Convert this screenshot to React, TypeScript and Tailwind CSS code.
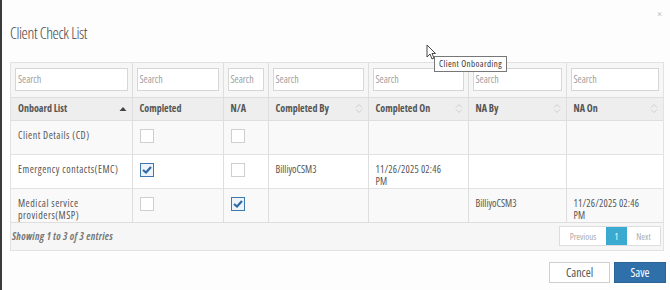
import React from "react";

const SortBoth = () => (
  <svg width="8" height="11" viewBox="0 0 8 11" className="shrink-0">
    <path d="M1 4.5 L4 1.5 L7 4.5" fill="none" stroke="#cfcfcf" strokeWidth="1" />
    <path d="M1 6.5 L4 9.5 L7 6.5" fill="none" stroke="#cfcfcf" strokeWidth="1" />
  </svg>
);

const SortUp = () => (
  <svg width="8" height="6" viewBox="0 0 8 6" className="shrink-0">
    <path d="M0.5 5 L4 1 L7.5 5 Z" fill="#444" />
  </svg>
);

const Check = ({ checked }: { checked: boolean }) =>
  checked ? (
    <div className="w-[14px] h-[14px] border border-[#3f78b0] bg-[#eef3f9] flex items-center justify-center">
      <svg width="10" height="8" viewBox="0 0 10 8">
        <path d="M1 4 L4 6.5 L9 1" fill="none" stroke="#2e6aa5" strokeWidth="2.2" />
      </svg>
    </div>
  ) : (
    <div className="w-[14px] h-[14px] border border-[#cfcfcf] bg-white" />
  );

const cols = [
  { name: "Onboard List", w: 121, icon: "up" },
  { name: "Completed", w: 91, icon: "" },
  { name: "N/A", w: 45, icon: "" },
  { name: "Completed By", w: 100, icon: "both" },
  { name: "Completed On", w: 100, icon: "both" },
  { name: "NA By", w: 98, icon: "both" },
  { name: "NA On", w: 97, icon: "both" },
];

type Row = {
  name: string;
  c: boolean;
  na: boolean;
  by: string;
  on: string;
  naBy: string;
  naOn: string;
  bg: string;
};

const rows: Row[] = [
  { name: "Client Details (CD)", c: false, na: false, by: "", on: "", naBy: "", naOn: "", bg: "bg-[#f9f9f9]" },
  { name: "Emergency contacts(EMC)", c: true, na: false, by: "BilliyoCSM3", on: "11/26/2025 02:46 PM", naBy: "", naOn: "", bg: "bg-white" },
  { name: "Medical service providers(MSP)", c: false, na: true, by: "", on: "", naBy: "BilliyoCSM3", naOn: "11/26/2025 02:46 PM", bg: "bg-[#f9f9f9]" },
];

export default function App() {
  const td = "border-r border-[#dedede] last:border-r-0 align-top pl-[7px] pr-[7px] pt-[8px] text-[10px] leading-[12px] text-[#555] [font-stretch:75%]";
  const tdName = "border-r border-[#dedede] align-top pl-[7px] pr-[4px] pt-[8px] text-[10px] leading-[12px] text-[#555] [font-stretch:75%] tracking-[0.5px]";
  const tdDate = "border-r border-[#dedede] last:border-r-0 align-top pl-[7px] pr-[14px] pt-[8px] text-[10px] leading-[12px] text-[#555] [font-stretch:75%] tracking-[0.2px]";
  return (
    <div className="w-[670px] h-[290px] overflow-hidden bg-[#3a3a3a] flex font-['Open_Sans',sans-serif] [font-stretch:75%]">
      <div className="ml-[2px] flex-1 bg-[#fdfdfd] relative flex flex-col">
        <div className="h-[60px] relative">
          <div className="absolute left-[8px] top-[23px] text-[16px] leading-[20px] font-light text-[#444] [font-stretch:75%] tracking-[-0.4px]">
            Client Check List
          </div>
          <div className="absolute right-[10px] top-[6px] text-[11px] text-[#b8b8b8]">×</div>
        </div>

        <div className="mx-[8px] mt-[2px] border border-[#e2e2e2] bg-[#f6f6f6] h-[189px] flex flex-col">
          <table className="table-fixed border-collapse w-[652px] border-b border-[#dedede]">
            <colgroup>
              {cols.map((c) => (
                <col key={c.name} style={{ width: c.w }} />
              ))}
            </colgroup>
            <thead>
              <tr className="h-[34px] bg-[#f6f6f6]">
                {cols.map((c) => (
                  <th key={c.name} className="border-r border-[#dedede] last:border-r-0 px-[4px] align-middle">
                    <div className="h-[23px] border border-[#d6d6d6] bg-white flex items-center px-[2px] text-[10px] font-normal text-[#a0a0a0] text-left">
                      Search
                    </div>
                  </th>
                ))}
              </tr>
              <tr className="h-[23px] bg-[#eeeeee] border-t border-b border-[#dedede]">
                {cols.map((c) => (
                  <th key={c.name} className="border-r border-[#dedede] last:border-r-0 pl-[7px] pr-[5px] text-left align-middle">
                    <div className="flex items-center justify-between text-[10px] font-bold text-[#555]">
                      <span>{c.name}</span>
                      {c.icon === "up" && <SortUp />}
                      {c.icon === "both" && <SortBoth />}
                    </div>
                  </th>
                ))}
              </tr>
            </thead>
            <tbody>
              {rows.map((r, i) => (
                <tr key={i} className={`h-[34px] border-t border-[#e2e2e2] ${r.bg}`}>
                  <td className={tdName}>{r.name}</td>
                  <td className={td}>
                    <Check checked={r.c} />
                  </td>
                  <td className={td}>
                    <Check checked={r.na} />
                  </td>
                  <td className={td}>{r.by}</td>
                  <td className={tdDate}>{r.on}</td>
                  <td className={td}>{r.naBy}</td>
                  <td className={tdDate}>{r.naOn}</td>
                </tr>
              ))}
            </tbody>
          </table>
          <div className="flex-1 flex items-center justify-between pl-[1px] pr-[2px]">
            <span className="text-[10px] font-bold italic text-[#777] tracking-[0.3px]">Showing 1 to 3 of 3 entries</span>
            <div className="flex h-[20px] border border-[#dddddd] bg-white text-[9px]">
              <div className="w-[46px] flex items-center justify-center text-[#aaa]">Previous</div>
              <div className="w-[21px] flex items-center justify-center bg-[#3aaad0] text-white">1</div>
              <div className="w-[33px] flex items-center justify-center text-[#aaa]">Next</div>
            </div>
          </div>
        </div>

        <div className="flex justify-end gap-[4px] pr-[6px] mt-[11px]">
          <button className="w-[61px] h-[21px] border border-[#cfcfcf] bg-white text-[12px] text-[#555]">
            Cancel
          </button>
          <button className="w-[52px] h-[21px] bg-[#2f70ab] border border-[#2a6496] text-[12px] text-white">
            Save
          </button>
        </div>

        <div className="absolute left-[432px] top-[56px] h-[16px] px-[4px] border border-[#777] bg-white text-[9px] leading-[14px] text-[#333] whitespace-nowrap tracking-[0.4px]">
          Client Onboarding
        </div>
        <svg className="absolute left-[424px] top-[44px]" width="10" height="16" viewBox="0 0 10 16">
          <path d="M1 1 L1 13 L4 10 L6 15 L8 14 L6 9.5 L9.5 9.5 Z" fill="white" stroke="#333" strokeWidth="0.9" strokeLinejoin="round" />
        </svg>
      </div>
    </div>
  );
}
